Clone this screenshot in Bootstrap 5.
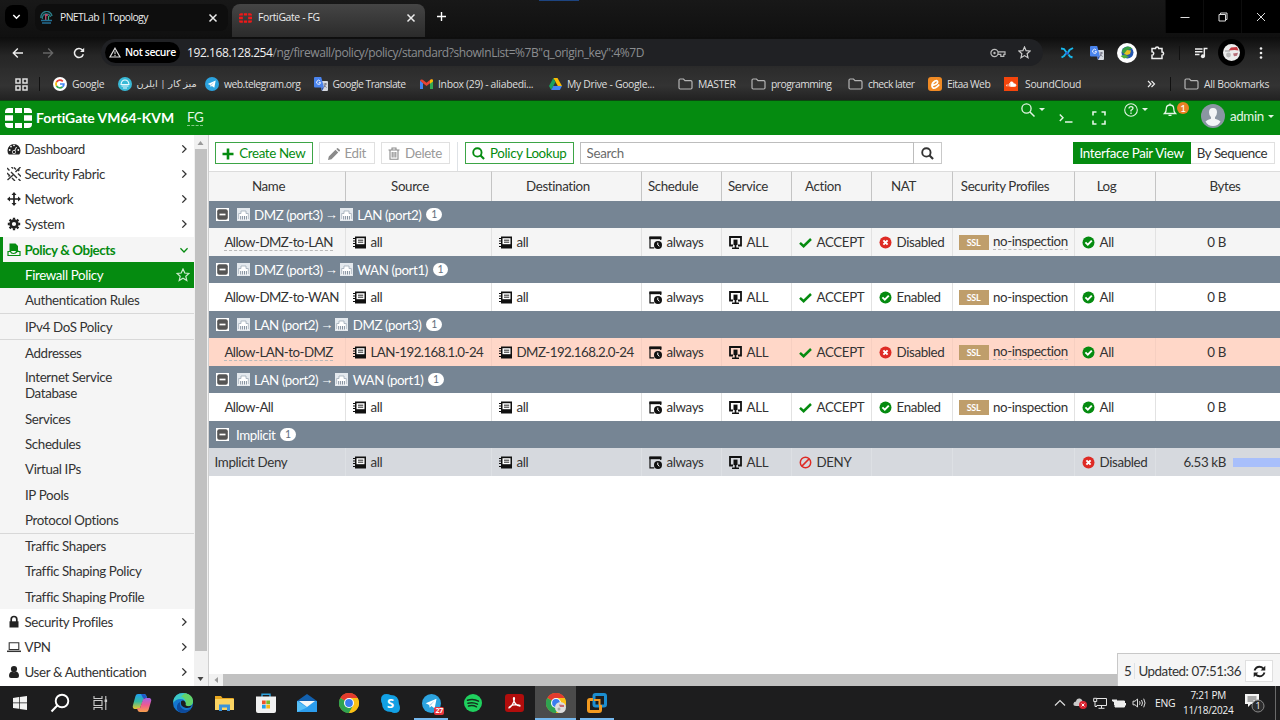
<!DOCTYPE html>
<html lang="en">
<head>
<meta charset="utf-8">
<meta name="viewport" content="width=device-width, initial-scale=1">
<title>FortiGate - FG</title>
<link href="https://cdn.jsdelivr.net/npm/bootstrap@5.3.0/dist/css/bootstrap.min.css" rel="stylesheet">
<style>
:root{--fg:#058b10;--slate:#768594}
body{width:1280px;height:720px;overflow:hidden;font-family:"Lato",sans-serif;font-size:13.33px;letter-spacing:-.36px;line-height:1.2;color:#333;background:#fff}
svg{display:block;flex:none}
.ui{font-family:"Open Sans","Noto Sans","DejaVu Sans",sans-serif;font-size:10.4px;letter-spacing:-.26px;white-space:nowrap}
.s14{width:14px;height:14px}.s13{width:13px;height:13px}.s20{width:20px;height:20px}

/* browser window */
.tabstrip{height:37px;background:linear-gradient(#181818,#101010);color:#ececec;display:grid;grid-template-columns:5px 23px 7px 193px 4px 193px 32px 708px 38px 38px 39px}
.tabstrip>.tabsearch{height:23px;margin-top:5px;background:#000;border-radius:8px}
.btab{height:27px;margin-top:4px;background:#0e0e0e;border-radius:8px;padding:0 10px 0 5px}
.btab .ui{letter-spacing:-.6px;margin-left:7px}
.btab.on{height:33px;background:linear-gradient(#454545,#2b2b2b);border-radius:8px 8px 0 0;padding:0 9px 6px 7px}
.btab.on .ui{letter-spacing:-.36px;margin-left:6px}
.favred{color:#f21818}
.winbtn{height:33px;background:#000;border-left:1px solid #0d0d0d}
.glow{top:0;left:539px;width:40px;height:1px;background:#1d4480}
.addressrow{height:31px;background:linear-gradient(#0d0d0d,#262626 60%,#2b2b2b);display:grid;grid-template-columns:3px 30px 30px 32px 6px 942px 9px repeat(4,30px) 14px repeat(3,30px) 4px}
.addressrow>*{height:31px}
.omni{height:27px!important;margin-top:2px;background:#202124;border-radius:14px;padding:0 12px 0 4px}
.chip{height:21px;border-radius:11px;background:#000;width:75px;padding:0 4px;font-weight:600;color:#fff;letter-spacing:-.38px}
.url{font-size:12px;letter-spacing:-.44px;color:#8b8d90;margin-left:7px;padding-top:2px}
.url b{font-weight:400;color:#f0f0f0;letter-spacing:-.42px}
.starbtn{margin-left:12px}
.bookmarks{height:32px;background:linear-gradient(#2c2c2c,#333 55%,#222);color:#dedede;letter-spacing:-.55px;display:grid;grid-template-columns:39px 14px 64.5px 87.5px 108.500px 106.500px 129px 129px 73px 97px 80px 76px 143px 37px 95px}
.bookmarks>span{display:flex;align-items:center;gap:5px}
.bookmarks>.loose{letter-spacing:-.32px}
.bookmarks>.wide{gap:7px}
.rtltitle{font-size:9.8px;letter-spacing:0}
.vbar{width:1px;height:14px;background:#111}
.morebar{margin-left:9px}

/* product header */
.fghead{height:35px;background:var(--fg);border-top:1px solid #0a4a10;color:#e4f5e5;display:grid;grid-template-columns:5px 31px 151px 834px 38px 33px 32px 39px 14px 24px 29px 50px}
.fgname{font-weight:700;color:#fff;font-size:13.9px;letter-spacing:.02px}
.dots{border-bottom:1px dashed #b9b9b9;line-height:15px}
.fgname+.fgvd .dots{border-color:#85c98a}
.caret{width:0;height:0;border:3.4px solid transparent;border-top-color:currentColor;border-bottom:0}
.bellcount{width:12px;height:12px;border-radius:6px;background:#ea8123;color:#fff;font-size:10px;text-align:center;line-height:12px}
.bellslot{padding-top:1px}

/* sidebar */
.page-area{height:551px}
.side{width:194px;padding-top:1px;border-right:0;background:#fff}
.mi{height:25.27px;padding:0 6px 0 7px;display:flex;align-items:center;color:#333}
.mi svg.lead-ic{width:14px;height:14px;margin:0 4px 0 -.5px}
.mi .go{margin-left:auto;width:8px;height:8px}
.mi.open{background:#f5f5f5;color:var(--fg);font-weight:700;letter-spacing:-.42px;border-left:3px solid var(--fg);padding-left:4px}
.submenu{background:#f5f5f5}
.submenu .mi{padding-left:25px;padding-right:4px}
.submenu .cur{background:var(--fg);color:#fff}
.submenu .two{height:40.8px;line-height:15.4px;padding-right:60px}
.submenu .rule{height:1px;background:#d8d8d8}
.vscroll{width:14px;background:#f1f1f1}
.vthumb{height:502px;background:#c1c1c1;width:12px;margin:0 auto}
.main{border-left:1px solid #cfcfcf;width:1072px}

/* toolbar */
.tools{height:36px;padding:7px 5.5px 0 5.5px}
.fbtn{height:22px;border:1px solid #e0e0e0;background:#fff;color:#999;border-radius:0;padding:1px 0 0;font-size:13.33px;letter-spacing:-.36px;line-height:1;display:flex;align-items:center;justify-content:center;gap:5px;white-space:nowrap}
.fbtn.go{border-color:#3da546;color:var(--fg)}
.fbtn.gap6{margin-left:6px}
.divider{width:8px}
.w98{width:98.500px}.w55{width:55.5px}.w69{width:69px}.w109{width:109.5px;margin-left:7px}.w28{width:28px}
.fsearch{width:334px;height:22px;border:1px solid #bdbdbd;border-radius:0;padding:0 6px;font-size:13.33px;letter-spacing:-.3px;color:#333;margin-left:5.500px}
.fsearch::placeholder{color:#6b6b6b}
.findbtn{border-color:#c9c9c9;color:#333}
.pair{width:118px;background:var(--fg);border-color:var(--fg);color:#fff;letter-spacing:-.33px}
.seq{width:84px;color:#333;border-left:0;letter-spacing:-.45px}

/* policy table */
.ptable{width:1093px;table-layout:fixed;margin:0;color:#333;white-space:nowrap;border-collapse:separate;border-spacing:0}
.ptable>:not(caption)>*>*{padding:0 0 0 7px;height:28px;border:0;border-right:1px solid #e2e2e2;background:transparent;color:inherit;box-shadow:none;vertical-align:middle;line-height:16px}
.ptable>thead>tr>th{height:30px;background:#f5f5f5;font-weight:400;text-align:center;padding:0 17px 2px 0;border-top:1px solid #dcdcdc;border-right-color:#c4c4c4}
.ptable>thead>tr>th:last-child{padding-right:7px}
.ptable>tbody>tr.grp>td{height:27px;background:var(--slate);color:#fff;border:0;letter-spacing:-.42px}
.ptable .lt{background:#f5f5f5}.ptable .hot{background:#ffd7c8}.ptable .imp{background:#d6d9de}
.ptable>tbody>tr.hot>td{border-right-color:#f6cfc1}
.ptable>tbody>tr.imp>td{border-right-color:#dde0e4}
.ptable>tbody>tr>td.nm{padding-left:15.4px;letter-spacing:-.53px}
.ptable>tbody>tr.imp>td.nm{padding-left:5.6px;letter-spacing:-.36px}
.c{display:flex;align-items:center;gap:4.5px}
.c svg{width:13px;height:13px}
.netobj{letter-spacing:-.55px}
.grp .c{gap:0}
.grp .c svg.pt{margin:0 4.5px 0 7.5px}
.grp .c svg.pt.n2{margin-left:0}
.grpname{margin-left:7px}
.arr{font-family:"Liberation Sans",sans-serif;width:17px;text-align:center;font-size:13px;letter-spacing:0}
.cnt{width:15.5px;height:13px;border-radius:7px;background:#fff;color:#5f6e7c;font-size:10.5px;line-height:13px;text-align:center;margin-left:5px;letter-spacing:0}
.ssl{width:30px;height:15px;background:#bf9e6b;color:#fff;font-size:9px;font-weight:700;letter-spacing:-.4px;text-align:center;line-height:15px;margin-left:-1.5px}
.insp{letter-spacing:-.42px}
.amt{width:63px;text-align:right}
.meter{height:9px;background:#a8bffb;margin-left:2px}
.hscroll{height:12px;background:#f1f1f1}
.hthumb{background:#c1c1c1}
.status{right:0;bottom:0;width:163px;height:33px;background:#f5f5f5;border:1px solid #c8c8c8;border-width:1px 0 0 1px;padding:2px 7px 0 6px}
.status .vline{height:16px;margin:0 3px}
.status .stamp{letter-spacing:-.44px}

/* taskbar */
.taskbar{height:34px;background:#1d1d1e;color:#f2f2f2;display:grid;grid-template-columns:40px 40px 41px repeat(12,41.4px) 432px 20px 20px 20px 19px 21px 31px 55px 39px 5px}
.taskbar>span{display:flex;align-items:center;justify-content:center}
.run{box-shadow:inset 0 -2px #75b8ee}
.tileon{background:#4b4b4b}
.run-in{width:34px;height:34px;display:flex;align-items:center;justify-content:center}
.clock{font-size:10px;line-height:15px;text-align:center}
.tgcount{right:-3px;bottom:-2px;background:#e8353c;color:#fff;font-size:7px;line-height:8px;border-radius:2px;padding:0 1px}
.desk{border-left:1px solid #6a6a6a}
</style>
</head>
<body>
<svg width="0" height="0" class="position-absolute" aria-hidden="true">
 <symbol id="x" viewBox="0 0 10 10"><path d="M1.5 1.5l7 7M8.5 1.5l-7 7" stroke="currentColor" stroke-width="1.5"/></symbol>
 <symbol id="forti" viewBox="0 0 27 20"><path d="M4 0h4v5H0V4a4 4 0 0 1 4-4zM10 0h7v5h-7zM19 0h4a4 4 0 0 1 4 4v1h-8zM0 7.3h8v5.4H0zM19 7.3h8v5.4h-8zM0 15h8v5H4a4 4 0 0 1-4-4zM10 15h7v5h-7zM19 15h8v1a4 4 0 0 1-4 4h-4z" fill="currentColor"/></symbol>
 <symbol id="folder" viewBox="0 0 15 14"><path d="M1 3.2Q1 2 2.2 2H5.5L7 3.7h5.8Q14 3.7 14 5v5.8q0 1.2-1.2 1.2H2.2Q1 12 1 10.8z" fill="none" stroke="#b5b5b5" stroke-width="1.2"/></symbol>
 <symbol id="gt" viewBox="0 0 14 14"><path d="M5 4h8q1 0 1 1v8q0 1-1 1H8z" fill="#d5d9df"/><path d="M1 0h6.2L10 10.5H1q-1 0-1-1V1q0-1 1-1z" fill="#4a84ee"/><path d="M7 10.5h3L8 14z" fill="#2c55b5"/><path d="M6.2 4.1A2 2 0 1 0 6.600 5.600H4.800" stroke="#e8f0ff" fill="none"/><path d="M9.500 7h3.500M11.300 6v1q0 2-1.500 3.500M10.300 8.300q1 1.400 2.300 2.200" stroke="#667" stroke-width=".8" fill="none"/></symbol>
 <symbol id="tg" viewBox="0 0 14 14"><circle cx="7" cy="7" r="7" fill="#2ca3df"/><path d="M2.700 6.900l8-3.400-1.400 7.200-2.400-1.800-1.200 1.200-.4-2z" fill="#fff"/><path d="M5.300 8.100l4-3.200-2.900 3.500z" fill="#a7cfea"/></symbol>
 <symbol id="chrome" viewBox="0 0 20 20"><circle cx="10" cy="10" r="10" fill="#fbc116"/><path d="M10 10L1.300 5A10 10 0 0 1 18.700 5z" fill="#e33b2e"/><path d="M10 10L1.300 5A10 10 0 0 0 10 20l4.300-7.500z" fill="#2fa350"/><path d="M10 5h8.700A10 10 0 0 1 10 20l4.300-7.500z" fill="#fbc116"/><circle cx="10" cy="10" r="5" fill="#fff"/><circle cx="10" cy="10" r="3.900" fill="#3a7df0"/></symbol>
 <symbol id="go" viewBox="0 0 8 8"><path d="M2.300.4L6 4 2.300 7.600" fill="none" stroke="currentColor" stroke-width="1.300"/></symbol>
 <symbol id="mag" viewBox="0 0 14 14"><circle cx="5.800" cy="5.800" r="4.500" fill="none" stroke="currentColor" stroke-width="2"/><path d="M9 9l4 4" stroke="currentColor" stroke-width="2.300"/></symbol>
 <symbol id="minus" viewBox="0 0 13 13"><path d="M0 0h13v13H0z" fill="#fff"/><rect x="1.200" y="1.200" width="10.600" height="10.600" rx="2" fill="#555"/><path d="M3.500 6.500h6" stroke="#fff" stroke-width="1.700"/></symbol>
 <symbol id="port" viewBox="0 0 13 13"><path d="M0 0h13v13H0z" fill="#e4e9ee"/><path d="M1.500 11.500V5.500h2.500V3h5v2.500h2.500v6z" fill="#fff"/><path d="M1.700 11V5.500h2.300V3h5v2.500h2.300V11" fill="none" stroke="#97a4b0" stroke-width=".7"/><path d="M3.700 11.500V8M5.600 11.500V8M7.500 11.500V8M9.400 11.500V8" stroke="#768594" stroke-width=".9"/></symbol>
 <symbol id="addr" viewBox="0 0 13 13"><path d="M2 .5h11v12H2z" fill="#111"/><path d="M3.500 2.200h8v6h-8z" fill="#fff"/><path d="M5 4.200h5.200M5 6.200h5.200" stroke="#111" stroke-width=".9"/><path d="M0 2.500h3M0 5h3M0 7.500h3M0 10.500h3" stroke="#111" stroke-width="1.100"/></symbol>
 <symbol id="sched" viewBox="0 0 13 13"><path d="M5.200 11.800H1V1.300h10.700V4" fill="none" stroke="#111" stroke-width="1.200"/><path d="M.4.500h12v2.700H.4z" fill="#111"/><circle cx="9" cy="9" r="4" fill="#111"/><path d="M8.800 6.600V9l1.600 1.300" fill="none" stroke="#fff"/></symbol>
 <symbol id="svc" viewBox="0 0 13 13"><path d="M4 9.500H1V1h11v8.500H9" fill="none" stroke="#111" stroke-width="1.800"/><path d="M4.500 3.600h4v5.500h-4z" fill="#111"/><path d="M3 12.200h7M6.500 8v4.200" stroke="#111" stroke-width="1.600"/></symbol>
 <symbol id="ok" viewBox="0 0 13 13"><path d="M1 6.800l3.600 3.400L12 3" fill="none" stroke="#058b10" stroke-width="2.500"/></symbol>
 <symbol id="on" viewBox="0 0 13 13"><circle cx="6.500" cy="6.500" r="6" fill="#058b10"/><path d="M3.400 6.400l2.400 2.300 4-4" fill="none" stroke="#fff" stroke-width="1.900"/></symbol>
 <symbol id="off" viewBox="0 0 13 13"><circle cx="6.500" cy="6.500" r="6" fill="#de2a24"/><path d="M4.400 4.400l4.200 4.200M8.600 4.400L4.400 8.600" stroke="#fff" stroke-width="2"/></symbol>
 <symbol id="deny" viewBox="0 0 13 13"><circle cx="6.500" cy="6.500" r="5.200" fill="none" stroke="#de2a24" stroke-width="1.500"/><path d="M2.900 10.100l7.200-7.200" stroke="#de2a24" stroke-width="1.500"/></symbol>
</svg>

<!-- tab strip -->
<header class="tabstrip position-relative">
 <i class="glow position-absolute"></i><i></i>
 <span class="tabsearch d-flex align-items-center justify-content-center"><svg width="9" height="9" viewBox="0 0 9 9"><path d="M1.300 3l3.200 3.200L7.700 3" fill="none" stroke="#fff" stroke-width="1.500"/></svg></span><i></i>
 <div class="btab d-flex align-items-center">
  <svg class="s13" viewBox="0 0 13 13"><path d="M1 7a5.500 5.500 0 0 1 11-2M2.500 8a4 4 0 0 1 8-2" fill="none" stroke="#2b7c86" stroke-width="1.400"/><path d="M5 3h2.800v2H6.400v4H5z" fill="#b34a6a"/><path d="M8.500 5v4" stroke="#3ca77c" stroke-width="1.200"/><path d="M1 9.500h11M2 12h9" stroke="#246f95" stroke-width="1.600"/></svg>
  <span class="ui">PNETLab | Topology</span><svg class="ms-auto" width="10" height="10"><use href="#x"/></svg>
 </div><i></i>
 <div class="btab on d-flex align-items-center">
  <svg class="favred" width="13" height="10"><use href="#forti"/></svg>
  <span class="ui">FortiGate - FG</span><svg class="ms-auto" width="10" height="10"><use href="#x"/></svg>
 </div>
 <span class="d-flex align-items-center justify-content-center pb-1"><svg width="11" height="11" viewBox="0 0 11 11"><path d="M5.500 1v9M1 5.500h9" stroke="#fff" stroke-width="1.400"/></svg></span><i></i>
 <span class="winbtn d-flex align-items-center justify-content-center"><svg width="10" height="10"><path d="M.5 5.500h9" stroke="#ddd"/></svg></span>
 <span class="winbtn d-flex align-items-center justify-content-center"><svg width="10" height="10"><path d="M1 2.500h6.500V9H1zM2.500 2.500V1H9v6.500H7.500" fill="none" stroke="#ddd"/></svg></span>
 <span class="winbtn d-flex align-items-center justify-content-center"><svg width="10" height="10"><path d="M1 1l8 8M9 1L1 9" stroke="#ddd"/></svg></span>
</header>

<!-- address row -->
<nav class="addressrow">
 <i></i>
 <span class="d-flex align-items-center justify-content-center"><svg width="12" height="12" viewBox="0 0 12 12"><path d="M11 6H1.500M5.800 1.500L1.300 6l4.500 4.500" fill="none" stroke="#eee" stroke-width="1.400"/></svg></span>
 <span class="d-flex align-items-center justify-content-center"><svg width="12" height="12" viewBox="0 0 12 12"><path d="M1 6h9.500M6.200 1.500L10.700 6l-4.500 4.500" fill="none" stroke="#666" stroke-width="1.300"/></svg></span>
 <span class="d-flex align-items-center justify-content-center"><svg width="12" height="12" viewBox="0 0 12 12"><path d="M10.300 7.200A4.500 4.500 0 1 1 9.300 2.900L10.500 4" fill="none" stroke="#eee" stroke-width="1.500"/><path d="M11.200.8v4.100H7.100z" fill="#eee"/></svg></span>
 <i></i>
 <div class="omni d-flex align-items-center">
  <span class="ui chip d-flex align-items-center gap-1"><svg width="12" height="11" viewBox="0 0 12 11"><path d="M6 1.200L11 10H1z" fill="none" stroke="#ddd" stroke-width="1.200"/><path d="M6 4.200v3M6 8v1.200" stroke="#ddd" stroke-width="1.100"/></svg>Not secure</span>
  <span class="ui url"><b>192.168.128.254</b>/ng/firewall/policy/policy/standard?showInList=%7B"q_origin_key":4%7D</span>
  <svg class="ms-auto" width="16" height="10" viewBox="0 0 16 10"><circle cx="4.500" cy="5" r="3.600" fill="none" stroke="#bbb" stroke-width="1.200"/><circle cx="4.500" cy="5" r="1.200" fill="#bbb"/><path d="M8 3.800h7v2.500h-1.200v2h-3v-2H8" fill="none" stroke="#bbb" stroke-width="1.200"/></svg>
  <svg class="starbtn" width="13" height="13" viewBox="0 0 13 13"><path d="M6.500 1l1.600 3.700 4 .3-3 2.700.9 4-3.500-2.100L3 11.700l.9-4L.9 5l4-.3z" fill="none" stroke="#ccc" stroke-width="1.200"/></svg>
 </div>
 <i></i>
 <span class="d-flex align-items-center justify-content-center"><svg class="s14" viewBox="0 0 14 14"><path d="M1 2.500L4 3l2.500 3.500M13 2L9.500 4 7.500 7.500M6.300 7L4 10l-2.500 1.500M8.500 8.500L10 10.500l2.500 1" stroke="#18b9ee" stroke-width="1.900" fill="none"/><path d="M5.500 6h3v2.500h-3z" fill="#2866d8"/></svg></span>
 <span class="d-flex align-items-center justify-content-center"><svg class="s14"><use href="#gt"/></svg></span>
 <span class="d-flex align-items-center justify-content-center"><svg class="s20" viewBox="0 0 20 20"><circle cx="10" cy="10" r="10" fill="#fff"/><circle cx="10.500" cy="9.500" r="6" fill="#2456b0"/><path d="M5 8q1-4 6-4.500 3 0 4 2l-5 2-1.500 3Q5 11 5 8z" fill="#39a042"/><path d="M10 7l4 .5-1 3.500-3 1-3-1z" fill="#e8c022"/><path d="M3.500 13l3.500 2.500 5-1.500-4-2.500z" fill="#4fae3a"/></svg></span>
 <span class="d-flex align-items-center justify-content-center"><svg width="15" height="15" viewBox="0 0 15 15"><path d="M2 3.500h3.500a1.600 1.600 0 0 1 3.200 0H12V7a1.600 1.600 0 0 1 0 3.200v3.300H2V10.200a1.700 1.700 0 0 0 0-3.400z" fill="none" stroke="#eee" stroke-width="1.500"/></svg></span>
 <span class="d-flex align-items-center justify-content-center"><i class="vbar"></i></span>
 <span class="d-flex align-items-center justify-content-center"><svg width="14" height="12" viewBox="0 0 14 12"><path d="M1 2h7.500M1 4.700h7.500M1 7.500h4.500M10.300 9.500V1.500H13.500" stroke="#eee" stroke-width="1.500" fill="none"/><circle cx="8.900" cy="9.300" r="2" fill="#eee"/></svg></span>
 <span class="d-flex align-items-center justify-content-center"><svg width="27" height="27" viewBox="0 0 27 27"><circle cx="13.500" cy="13.500" r="13.500" fill="#000"/><circle cx="13.500" cy="13.500" r="8.500" fill="#ececec"/><path d="M13 8.500l6-.5 1.500 3.500-4-.5-6 .5z" fill="#c53a42"/><path d="M15 14.500l5-.8-1 3-3 .5z" fill="#b8707a"/><circle cx="10.500" cy="16" r="2.400" fill="#bbb"/><path d="M7 12h5" stroke="#999"/></svg></span>
 <span class="d-flex align-items-center justify-content-center"><svg width="4" height="14"><g fill="#eee"><circle cx="2" cy="2.500" r="1.300"/><circle cx="2" cy="7" r="1.300"/><circle cx="2" cy="11.500" r="1.300"/></g></svg></span>
</nav>

<!-- bookmarks -->
<nav class="ui bookmarks">
 <span class="justify-content-center ps-1"><svg width="13" height="13" viewBox="0 0 13 13"><path d="M1 1h4v4H1zM8 1h4v4H8zM1 8h4v4H1zM8 8h4v4H8z" fill="none" stroke="#ddd" stroke-width="1.500"/></svg></span>
 <span><i class="vbar"></i></span>
 <span class="loose"><svg class="s14" viewBox="0 0 14 14"><circle cx="7" cy="7" r="7" fill="#fff"/><path d="M9.800 4.300A4 4 0 0 0 3.500 5" fill="none" stroke="#e94235" stroke-width="1.700"/><path d="M3.500 5a4 4 0 0 0 0 4" fill="none" stroke="#fabb05" stroke-width="1.700"/><path d="M3.500 9a4 4 0 0 0 6 .8" fill="none" stroke="#34a853" stroke-width="1.700"/><path d="M9.500 9.800Q11 8.600 10.900 7H7" fill="none" stroke="#4285f4" stroke-width="1.700"/></svg>Google</span>
 <span><svg class="s14" viewBox="0 0 14 14"><circle cx="7" cy="7" r="7" fill="#39b9d6"/><path d="M3 7.500Q3.500 3 7 3t4 4.500zM3.500 9h7M5 11h4" fill="none" stroke="#e6f9ff" stroke-width="1.100"/></svg><bdi class="rtltitle" dir="rtl">میز کار | ایلرن</bdi></span>
 <span><svg class="s14"><use href="#tg"/></svg>web.telegram.org</span>
 <span><svg class="s14"><use href="#gt"/></svg>Google Translate</span>
 <span class="loose"><svg width="13" height="10" viewBox="0 0 13 10"><path d="M0 1.500V10h3V4z" fill="#4285f4"/><path d="M13 1.500V10h-3V4z" fill="#34a853"/><path d="M0 1.500Q1-.3 2.700.8L6.500 3.800 10.300.8Q12-.3 13 1.500L10 4.300 6.500 7 3 4.300z" fill="#ea4335"/><path d="M10 1l1-.6Q13 0 13 1.500V2.500L10 4.700z" fill="#fbbc04"/></svg>Inbox (29) - aliabedi...</span>
 <span class="loose"><svg width="13" height="12" viewBox="0 0 13 12"><path d="M4.300 0h4.200L13 8H8.800z" fill="#fbbc04"/><path d="M4.300 0L6.500 3.900 2.200 12 0 8z" fill="#1aa05c"/><path d="M4.300 8H13l-2.200 4H2.200z" fill="#4285f4"/></svg>My Drive - Google...</span>
 <span class="loose"><svg width="15" height="14"><use href="#folder"/></svg>MASTER</span>
 <span><svg width="15" height="14"><use href="#folder"/></svg>programming</span>
 <span><svg width="15" height="14"><use href="#folder"/></svg>check later</span>
 <span><svg class="s14" viewBox="0 0 14 14"><rect width="14" height="14" rx="3" fill="#f08a24"/><path d="M4.500 8.300Q9 7.500 9.700 5 9.500 3 7 4 3.700 6 4 9q.5 3 3.500 1.800 2-1 3.700-3.300" fill="none" stroke="#fff" stroke-width="1.700"/></svg>Eitaa Web</span>
 <span class="loose wide"><svg class="s14" viewBox="0 0 14 14"><path d="M0 0h14v14H0z" fill="#f5450c"/><path d="M6.500 5Q9 4 9.700 6.800 12 6.500 12 8.300 12 9.500 10.500 9.500H6.500zM5.500 6v3.500M4 7v2.500M2.500 7.700v1.500" fill="#fff" stroke="#fff" stroke-width=".7"/></svg>SoundCloud</span>
 <span><svg width="9" height="8"><path d="M1 1l3 3-3 3M4.500 1l3 3-3 3" fill="none" stroke="#eee" stroke-width="1.200"/></svg><i class="vbar morebar"></i></span>
 <span class="loose"><svg width="15" height="14"><use href="#folder"/></svg>All Bookmarks</span>
</nav>

<!-- product header -->
<header class="fghead">
 <i></i>
 <span class="d-flex align-items-center text-white"><svg width="27" height="20"><use href="#forti"/></svg></span>
 <span class="fgname d-flex align-items-center">FortiGate VM64-KVM</span>
 <span class="fgvd d-flex align-items-center"><span class="dots">FG</span></span>
 <span class="d-flex align-items-center gap-1 h-50"><svg width="14" height="14" viewBox="0 0 14 14"><circle cx="5.500" cy="5.500" r="4.600" fill="none" stroke="currentColor" stroke-width="1.300"/><path d="M9 9l4.500 4.500" stroke="currentColor" stroke-width="1.500"/></svg><i class="caret"></i></span>
 <span class="d-flex align-items-center"><svg width="14" height="10" viewBox="0 0 14 10"><path d="M.8 1.500L4 4.700.8 8M6 9h7.500" fill="none" stroke="currentColor" stroke-width="1.400"/></svg></span>
 <span class="d-flex align-items-center"><svg width="14" height="14" viewBox="0 0 14 14"><path d="M1 4.500V1h3.500M9.500 1H13v3.500M13 9.500V13H9.500M4.500 13H1V9.500" fill="none" stroke="currentColor" stroke-width="1.600"/></svg></span>
 <span class="d-flex align-items-center gap-1 h-50"><svg width="14" height="14" viewBox="0 0 14 14"><circle cx="7" cy="7" r="6.300" fill="none" stroke="currentColor" stroke-width="1.100"/><path d="M5 5.500Q5 3.700 7 3.700t2 1.600Q9 6.300 7 7.300V8.500M7 9.600v1.300" fill="none" stroke="currentColor" stroke-width="1.300"/></svg><i class="caret"></i></span>
 <span class="d-flex align-items-center h-50"><svg width="14" height="14" viewBox="0 0 14 14"><path d="M1.500 10.500Q3.300 9 3.300 5.500 3.500 2 7 2t3.700 3.500q0 3.500 1.800 5zM7 .5V2M5.500 12.300h3" fill="none" stroke="currentColor" stroke-width="1.300"/></svg></span>
 <span class="bellslot"><span class="bellcount d-block">1</span></span>
 <span class="d-flex align-items-center pb-1"><svg width="24" height="24" viewBox="0 0 24 24"><circle cx="12" cy="12" r="12" fill="#8b96a3"/><path d="M12 4q4 0 4 4.300 0 3-2 5v1.500q4 1 5.500 2.700Q17 22 12 22t-7.500-4.500Q6 15.800 10 14.800v-1.500q-2-2-2-5Q8 4 12 4z" fill="#f2f4f6"/></svg></span>
 <span class="d-flex align-items-center pb-1"><span>admin</span><i class="caret ms-1"></i></span>
</header>

<div class="page-area d-flex">
 <!-- navigation -->
 <aside class="side">
  <div class="mi"><svg class="lead-ic" viewBox="0 0 14 14"><path d="M1.800 12.500A6.500 6.500 0 1 1 12.200 12.500z" fill="#222"/><g fill="#fff"><circle cx="2.700" cy="8" r=".9"/><circle cx="4" cy="4.600" r=".9"/><circle cx="7" cy="3.300" r=".9"/><circle cx="11.300" cy="8" r=".9"/><circle cx="7" cy="10" r="1.900"/></g><path d="M7 10l2.500-5" stroke="#fff"/><circle cx="7" cy="10" r="1.200" fill="#222"/></svg>Dashboard<svg class="go"><use href="#go"/></svg></div>
  <div class="mi"><svg class="lead-ic" viewBox="0 0 14 14"><path d="M0 1l2.500 2.500M4 5l6 6M11.500 12L13.500 14M13.500 0L8.500 5M6 8L.5 13M7 .5l2 2M0 6l2.500 2.500M4.500 0L6 1.500M11 6.500l3 3M5 11l3 3M11 4l1.500-1.500M1.500 9.500L3 8" stroke="#333" stroke-width="1.400"/></svg>Security Fabric<svg class="go"><use href="#go"/></svg></div>
  <div class="mi"><svg class="lead-ic" viewBox="0 0 14 14"><path d="M7 2v10M2 7h10" stroke="#222" stroke-width="1.700"/><path d="M7 0l2.500 3h-5zM7 14l2.500-3h-5zM0 7l3-2.500v5zM14 7l-3-2.500v5z" fill="#222"/></svg>Network<svg class="go"><use href="#go"/></svg></div>
  <div class="mi"><svg class="lead-ic" viewBox="0 0 14 14"><circle cx="7" cy="7" r="3.400" fill="none" stroke="#222" stroke-width="2.600"/><path d="M7 .8v2M7 11.200v2M.8 7h2M11.200 7h2M2.600 2.600l1.500 1.500M9.900 9.900l1.500 1.500M11.400 2.600L9.900 4.100M4.100 9.900l-1.500 1.500" stroke="#222" stroke-width="2.300"/></svg>System<svg class="go"><use href="#go"/></svg></div>
  <div class="mi open"><svg class="lead-ic" viewBox="0 0 14 14"><path d="M2.500.5h6L11 3v5H2.500z" fill="currentColor"/><path d="M1 8.500v4h12v-4H9.500Q9 10.500 6.500 10.500T3.500 8.500z" fill="#f5f5f5" stroke="currentColor" stroke-width="1.200"/><path d="M9 5l3 3.200L9 10z" fill="currentColor"/></svg>Policy &amp; Objects<svg class="go" viewBox="0 0 8 8"><path d="M.4 2.300L4 6l3.600-3.700" fill="none" stroke="currentColor" stroke-width="1.300"/></svg></div>
  <div class="submenu">
   <div class="mi cur">Firewall Policy<svg class="ms-auto s14" viewBox="0 0 14 14"><path d="M7 1l1.800 4 4.200.4-3.200 2.900 1 4.300L7 10.300l-3.800 2.300 1-4.300L1 5.400 5.200 5z" fill="none" stroke="#cfeccf" stroke-width="1.200"/></svg></div>
   <div class="mi">Authentication Rules</div><div class="rule"></div>
   <div class="mi">IPv4 DoS Policy</div><div class="rule"></div>
   <div class="mi">Addresses</div>
   <div class="mi two">Internet Service Database</div>
   <div class="mi">Services</div><div class="mi">Schedules</div><div class="mi">Virtual IPs</div><div class="mi">IP Pools</div><div class="mi">Protocol Options</div><div class="rule"></div>
   <div class="mi">Traffic Shapers</div><div class="mi">Traffic Shaping Policy</div><div class="mi">Traffic Shaping Profile</div>
  </div>
  <div class="mi"><svg class="lead-ic" viewBox="0 0 14 14"><path d="M2.500 6.300h9v6.200h-9z" fill="#222"/><path d="M4.200 7V4.300a2.800 2.800 0 0 1 5.600 0V7" fill="none" stroke="#222" stroke-width="1.700"/></svg>Security Profiles<svg class="go"><use href="#go"/></svg></div>
  <div class="mi"><svg class="lead-ic" viewBox="0 0 14 14"><path d="M2.200 2.700h9.600v6.800H2.200z" fill="none" stroke="#333" stroke-width="1.100"/><path d="M0 11.300h14" stroke="#333" stroke-width="1.500"/></svg>VPN<svg class="go"><use href="#go"/></svg></div>
  <div class="mi"><svg class="lead-ic" viewBox="0 0 14 14"><circle cx="7" cy="4" r="3.100" fill="#222"/><path d="M2 11q0-4 3-4.500Q7 8 9 6.500q3 .5 3 4.500 0 2-2 2H4q-2 0-2-2z" fill="#222"/></svg>User &amp; Authentication<svg class="go"><use href="#go"/></svg></div>
 </aside>
 <div class="vscroll d-flex flex-column">
  <svg width="13" height="14"><path d="M3.500 10h6L6.500 6z" fill="#9a9a9a"/></svg><div class="vthumb"></div>
  <svg class="mt-auto" width="13" height="14"><path d="M3.500 5h6L6.500 9z" fill="#444"/></svg>
 </div>

 <!-- firewall policy -->
 <main class="main position-relative d-flex flex-column overflow-hidden">
  <div class="tools d-flex">
   <button class="btn fbtn go w98"><svg width="12" height="12"><path d="M6 .5v11M.5 6h11" stroke="currentColor" stroke-width="2.600"/></svg>Create New</button>
   <button class="btn fbtn w55 gap6"><svg width="12" height="12" viewBox="0 0 12 12"><path d="M0 12l.8-3.500L7.500 1.800l2.700 2.700L3.500 11.200zM8.300 1l1-1Q10 0 12 2l0 .7-1 1z" fill="#8a8a8a"/></svg>Edit</button>
   <button class="btn fbtn w69 gap6"><svg width="12" height="13" viewBox="0 0 12 13"><path d="M.5 3h11M4 3V1h4v2M2 3v9.300h8V3M4.200 5v5.500M6 5v5.500M7.800 5v5.500" fill="none" stroke="#8a8a8a" stroke-width="1.100"/></svg>Delete</button>
   <i class="divider border-end"></i>
   <button class="btn fbtn go w109"><svg width="13" height="13"><use href="#mag"/></svg>Policy Lookup</button>
   <input class="fsearch" placeholder="Search" aria-label="Search"><button class="btn fbtn w28 border-start-0 findbtn"><svg width="13" height="13"><use href="#mag"/></svg></button>
   <button class="btn fbtn pair ms-auto">Interface Pair View</button><button class="btn fbtn seq">By Sequence</button>
  </div>
  <table class="table ptable">
   <colgroup><col style="width:137px"><col style="width:146px"><col style="width:150px"><col style="width:80px"><col style="width:70px"><col style="width:80px"><col style="width:81px"><col style="width:122px"><col style="width:81px"><col></colgroup>
   <thead><tr><th>Name</th><th>Source</th><th>Destination</th><th>Schedule</th><th>Service</th><th>Action</th><th>NAT</th><th>Security Profiles</th><th>Log</th><th>Bytes</th></tr></thead>
   <tbody>
    <tr class="grp"><td colspan="10"><div class="c"><svg><use href="#minus"/></svg><svg class="pt"><use href="#port"/></svg>DMZ (port3)<span class="arr">→</span><svg class="pt n2"><use href="#port"/></svg>LAN (port2)<span class="cnt">1</span></div></td></tr>
    <tr class="lt"><td class="nm"><span class="dots">Allow-DMZ-to-LAN</span></td><td><div class="c"><svg><use href="#addr"/></svg>all</div></td><td><div class="c"><svg><use href="#addr"/></svg>all</div></td><td><div class="c"><svg><use href="#sched"/></svg>always</div></td><td><div class="c"><svg><use href="#svc"/></svg>ALL</div></td><td><div class="c"><svg><use href="#ok"/></svg>ACCEPT</div></td><td><div class="c"><svg><use href="#off"/></svg>Disabled</div></td><td><div class="c insp"><span class="ssl">SSL</span><span class="dots">no-inspection</span></div></td><td><div class="c"><svg><use href="#on"/></svg>All</div></td><td><div class="c"><span class="amt">0 B</span></div></td></tr>
    <tr class="grp"><td colspan="10"><div class="c"><svg><use href="#minus"/></svg><svg class="pt"><use href="#port"/></svg>DMZ (port3)<span class="arr">→</span><svg class="pt n2"><use href="#port"/></svg>WAN (port1)<span class="cnt">1</span></div></td></tr>
    <tr><td class="nm">Allow-DMZ-to-WAN</td><td><div class="c"><svg><use href="#addr"/></svg>all</div></td><td><div class="c"><svg><use href="#addr"/></svg>all</div></td><td><div class="c"><svg><use href="#sched"/></svg>always</div></td><td><div class="c"><svg><use href="#svc"/></svg>ALL</div></td><td><div class="c"><svg><use href="#ok"/></svg>ACCEPT</div></td><td><div class="c"><svg><use href="#on"/></svg>Enabled</div></td><td><div class="c insp"><span class="ssl">SSL</span>no-inspection</div></td><td><div class="c"><svg><use href="#on"/></svg>All</div></td><td><div class="c"><span class="amt">0 B</span></div></td></tr>
    <tr class="grp"><td colspan="10"><div class="c"><svg><use href="#minus"/></svg><svg class="pt"><use href="#port"/></svg>LAN (port2)<span class="arr">→</span><svg class="pt n2"><use href="#port"/></svg>DMZ (port3)<span class="cnt">1</span></div></td></tr>
    <tr class="hot"><td class="nm"><span class="dots">Allow-LAN-to-DMZ</span></td><td><div class="c netobj"><svg><use href="#addr"/></svg>LAN-192.168.1.0-24</div></td><td><div class="c netobj"><svg><use href="#addr"/></svg>DMZ-192.168.2.0-24</div></td><td><div class="c"><svg><use href="#sched"/></svg>always</div></td><td><div class="c"><svg><use href="#svc"/></svg>ALL</div></td><td><div class="c"><svg><use href="#ok"/></svg>ACCEPT</div></td><td><div class="c"><svg><use href="#off"/></svg>Disabled</div></td><td><div class="c insp"><span class="ssl">SSL</span><span class="dots">no-inspection</span></div></td><td><div class="c"><svg><use href="#on"/></svg>All</div></td><td><div class="c"><span class="amt">0 B</span></div></td></tr>
    <tr class="grp"><td colspan="10"><div class="c"><svg><use href="#minus"/></svg><svg class="pt"><use href="#port"/></svg>LAN (port2)<span class="arr">→</span><svg class="pt n2"><use href="#port"/></svg>WAN (port1)<span class="cnt">1</span></div></td></tr>
    <tr><td class="nm">Allow-All</td><td><div class="c"><svg><use href="#addr"/></svg>all</div></td><td><div class="c"><svg><use href="#addr"/></svg>all</div></td><td><div class="c"><svg><use href="#sched"/></svg>always</div></td><td><div class="c"><svg><use href="#svc"/></svg>ALL</div></td><td><div class="c"><svg><use href="#ok"/></svg>ACCEPT</div></td><td><div class="c"><svg><use href="#on"/></svg>Enabled</div></td><td><div class="c insp"><span class="ssl">SSL</span>no-inspection</div></td><td><div class="c"><svg><use href="#on"/></svg>All</div></td><td><div class="c"><span class="amt">0 B</span></div></td></tr>
    <tr class="grp"><td colspan="10"><div class="c"><svg><use href="#minus"/></svg><span class="grpname">Implicit</span><span class="cnt">1</span></div></td></tr>
    <tr class="imp"><td class="nm">Implicit Deny</td><td><div class="c"><svg><use href="#addr"/></svg>all</div></td><td><div class="c"><svg><use href="#addr"/></svg>all</div></td><td><div class="c"><svg><use href="#sched"/></svg>always</div></td><td><div class="c"><svg><use href="#svc"/></svg>ALL</div></td><td><div class="c"><svg><use href="#deny"/></svg>DENY</div></td><td></td><td></td><td><div class="c"><svg><use href="#off"/></svg>Disabled</div></td><td><div class="c"><span class="amt">6.53 kB</span><span class="meter flex-fill"></span></div></td></tr>
   </tbody>
  </table>
  <div class="hscroll mt-auto d-flex"><svg width="14" height="12"><path d="M9 3v6L5.500 6z" fill="#9a9a9a"/></svg><div class="hthumb flex-fill"></div></div>
  <div class="status position-absolute d-flex align-items-center"><span>5</span><i class="vline border-start"></i><span class="text-nowrap stamp">Updated: 07:51:36</span><button class="btn fbtn w28 ms-auto"><svg width="13" height="13" viewBox="0 0 13 13"><path d="M1.500 5.500Q3 1.700 6.500 1.700q2.200 0 3.800 1.800M11.500 7.500Q10 11.300 6.500 11.300q-2.200 0-3.800-1.800" fill="none" stroke="#222" stroke-width="1.900"/><path d="M12.300.8v4.700H7.600zM.7 12.200V7.500h4.700z" fill="#222"/></svg></button></div>
 </main>
</div>

<!-- taskbar -->
<footer class="taskbar ui">
 <span><svg width="14" height="14" viewBox="0 0 14 14"><path d="M0 2l6-.9v5.500H0zM6.700 1L14 0v6.600H6.700zM0 7.300h6v5.500L0 12zM6.700 7.300H14V14l-7.300-1z" fill="#f2f2f2"/></svg></span>
 <span><svg class="s20" viewBox="0 0 20 20"><circle cx="12" cy="8" r="6.300" fill="none" stroke="#fff" stroke-width="1.900"/><path d="M7.300 12.500L1.500 18.500" stroke="#fff" stroke-width="2"/></svg></span>
 <span><svg width="15" height="14" viewBox="0 0 15 14"><path d="M1 0v2.500h8V0M1 14v-2.500h8V14M1 4.500h8v5H1zM12.800 0v14" fill="none" stroke="#ccc" stroke-width="1.100"/><path d="M11.600 3.500h2.500V6h-2.500z" fill="#ccc"/></svg></span>
 <span><svg class="s20" viewBox="0 0 20 20"><defs><linearGradient id="cpa" x2="0" y2="1"><stop stop-color="#1f9ff0"/><stop offset=".5" stop-color="#35b9a0"/><stop offset="1" stop-color="#e9c52c"/></linearGradient><linearGradient id="cpb" x2="0" y2="1"><stop stop-color="#a262e8"/><stop offset=".5" stop-color="#ee5a90"/><stop offset="1" stop-color="#f7a14b"/></linearGradient></defs><path d="M6 1h6q2 0 2.500 2l.5 2h-3L8.500 14Q8 16 6 16H2.500Q0 15 1 12L3.500 3Q4 1 6 1z" fill="url(#cpa)"/><path d="M14 5h3.500Q20 6 19 8.500L16.500 17q-.5 2-2.500 2H8q-2 0-2.500-2L5 15h3l3-8.500Q11.700 5 14 5z" fill="url(#cpb)"/><path d="M11 1q3 0 4 4h-4L9 1z" fill="#2258c9"/></svg></span>
 <span><svg class="s20" viewBox="0 0 20 20"><circle cx="10" cy="10" r="10" fill="#1476cf"/><path d="M.3 8Q2 0 10 0t10 8q0 5-5 5-3 0-2.500-2 0-5-5-5Q2.500 6 .3 10z" fill="#3cc8c8"/><path d="M12 .3Q20 2 20 8q0 5-5 5-3 0-2.500-2Q13.500 5 8 3.500z" fill="#62d36a"/><path d="M7 9q-1 6 5 8 3 .5 6-1.500Q15 20 10 20q-7-1-6-7 .5-3 3-4z" fill="#0d4a9c"/><path d="M8 8.500Q10 6.500 12.300 9q1 2 .2 3 1 2 6.500.5-2 3-6 2.500Q7 13.500 8 8.500z" fill="#1d1d1e"/></svg></span>
 <span><svg width="19" height="16" viewBox="0 0 19 16"><path d="M0 1h6l1.500 2H18q1 0 1 1v11H0z" fill="#e9a820"/><path d="M0 4h19v11H0z" fill="#fbd463"/><path d="M4 16V9.500h11V16h-3v-3.500H7V16z" fill="#3a93dc"/></svg></span>
 <span><svg width="20" height="20" viewBox="0 0 20 20"><path d="M6 4V1.300h8V4" fill="none" stroke="#2da1dc" stroke-width="1.400"/><path d="M0 3.500h20V18q0 2-2 2H2q-2 0-2-2z" fill="#f1f1f1"/><path d="M6 7.500h3.700v3.700H6z" fill="#ef5227"/><path d="M10.300 7.500H14v3.700h-3.700z" fill="#7ab929"/><path d="M6 11.800h3.700v3.700H6z" fill="#22a0e8"/><path d="M10.300 11.800H14v3.700h-3.700z" fill="#fab813"/></svg></span>
 <span><svg width="20" height="18" viewBox="0 0 20 18"><path d="M0 7l10-7 10 7z" fill="#1260ae"/><path d="M0 7h20v11H0z" fill="#2c9ded"/><path d="M2 7h16l-8 6z" fill="#f7f7f7"/><path d="M0 7l10 6.500L0 18z" fill="#57bff7"/></svg></span>
 <span><svg class="s20"><use href="#chrome"/></svg></span>
 <span><svg width="19" height="19" viewBox="0 0 19 19"><path d="M5.500 0Q8 0 9.500 1 18 1 18 10q1 2 1 4 0 5-5.500 5-2 0-3-1Q1 18 1 9.500 0 8 0 5.500 0 0 5.500 0z" fill="#12a0e4"/><text x="9.500" y="14" text-anchor="middle" font-size="13" font-weight="700" fill="#fff">S</text></svg></span>
 <span><span class="run-in run"><span class="position-relative"><svg width="19" height="19"><use href="#tg"/></svg><b class="tgcount position-absolute">27</b></span></span></span>
 <span><svg width="18" height="18" viewBox="0 0 18 18"><circle cx="9" cy="9" r="9" fill="#1fd15e"/><path d="M3.500 6.300q6-1.800 11 .9M4 9.300q5-1.400 9.500.9M4.500 12q4.300-1.100 8 .8" fill="none" stroke="#14331d" stroke-width="1.500" stroke-linecap="round"/></svg></span>
 <span><svg width="19" height="18" viewBox="0 0 19 18"><rect width="19" height="18" rx="3" fill="#b20d0c"/><path d="M4 14q3-1.500 5-7Q10 3.500 9 3.500T8.800 6.500Q10 11 14.500 12q1 .5.300-.7Q11 10 6.500 11.500 3.500 13 4 14z" fill="none" stroke="#fff" stroke-width="1.200"/></svg></span>
 <span class="tileon run"><span class="position-relative"><svg class="s20"><use href="#chrome"/></svg><svg class="position-absolute bottom-0 end-0" width="11" height="11"><circle cx="5.500" cy="5.500" r="5.500" fill="#ddd"/><path d="M4 2.500l5 .5v2H5z" fill="#c96a70"/><circle cx="4" cy="7" r="1.500" fill="#aaa"/></svg></span></span>
 <span><span class="run-in run"><svg width="20" height="20" viewBox="0 0 20 20"><rect x="7" y="1.500" width="11.500" height="11.500" rx="1.500" fill="none" stroke="#1c8ed0" stroke-width="3"/><path d="M6 6.500H3q-1.500 0-1.500 1.500v9q0 1.500 1.500 1.500h9q1.500 0 1.500-1.500v-5" fill="none" stroke="#f39a1f" stroke-width="3"/><path d="M7 7h5.500v5" fill="none" stroke="#f39a1f" stroke-width="2"/></svg></span></span>
 <i></i>
 <span><svg width="12" height="8"><path d="M1 6.500l5-5 5 5" fill="none" stroke="#ddd" stroke-width="1.200"/></svg></span>
 <span><svg width="14" height="12" viewBox="0 0 14 12"><path d="M3 9Q0 9 .5 6.500 1 4.500 3 4.500 3.500 1 7 1.500q2 .5 2.500 2.500Q12 4 12 7l-1 2z" fill="#c9c9c9"/><circle cx="10" cy="8" r="4" fill="#da2431"/><path d="M8.600 6.600l2.800 2.800M11.400 6.600L8.600 9.400" stroke="#fff"/></svg></span>
 <span><svg width="14" height="12" viewBox="0 0 14 12"><path d="M3.500 1.500h10v7h-10M8.500 8.500V11M5.500 11.300h6M.7 1.300h3v3.200h-3zM2 4.500v5h2" fill="none" stroke="#e5e5e5"/></svg></span>
 <span><svg width="14" height="10" viewBox="0 0 14 10"><path d="M3 3h9.500v6H3z" fill="#eee" stroke="#eee"/><path d="M13 5h1v2.500h-1zM0 1.500h5v3H2.500L0 3z" fill="#eee"/><path d="M2.500 4v3" stroke="#eee"/></svg></span>
 <span><svg width="14" height="12" viewBox="0 0 14 12"><path d="M1 4.200h2L5.500 2v8L3 7.800H1zM7.500 4.300q1.200 1.700 0 3.400M9.500 3q2 3 0 6M11.700 1.700q2.700 4.300 0 8.600" fill="none" stroke="#ddd"/></svg></span>
 <span>ENG</span>
 <span class="clock">7:21 PM<br>11/18/2024</span>
 <span><svg width="20" height="20" viewBox="0 0 20 20"><path d="M0 1h14v10H6l-3 3v-3H0z" fill="#f5f5f5"/><path d="M2.500 4h9M2.500 6h9M2.500 8h6" stroke="#333" stroke-width=".8"/><circle cx="13" cy="13" r="6" fill="#2c2c2d" stroke="#888"/><text x="13" y="16.300" text-anchor="middle" font-size="9" fill="#fff">1</text></svg></span>
 <span class="desk"></span>
</footer>
<script src="https://cdn.jsdelivr.net/npm/bootstrap@5.3.0/dist/js/bootstrap.bundle.min.js"></script>
</body>
</html>
